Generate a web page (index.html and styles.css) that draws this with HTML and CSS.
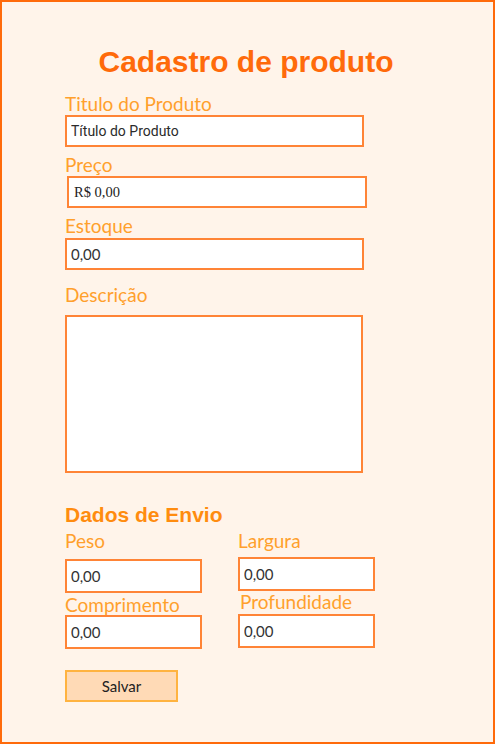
FILE: index.html
```html
<!DOCTYPE html>
<html lang="pt-BR">
<head>
<meta charset="utf-8">
<title>Cadastro de produto</title>
<link rel="stylesheet" href="styles.css">
</head>
<body>
<div class="frame">
  <h1 class="title">Cadastro de produto</h1>

  <label class="label l-titulo">Titulo do Produto</label>
  <input class="field f-titulo" type="text" value="Título do Produto">

  <label class="label l-preco">Preço</label>
  <input class="field f-preco" type="text" value="R$ 0,00">

  <label class="label l-estoque">Estoque</label>
  <input class="field f-estoque" type="text" value="0,00">

  <label class="label l-desc">Descrição</label>
  <textarea class="area"></textarea>

  <h2 class="subtitle">Dados de Envio</h2>

  <div class="ship">
    <div class="col">
      <label class="label">Peso</label>
      <input class="field small f-peso" type="text" value="0,00">
      <label class="label l-comp">Comprimento</label>
      <input class="field small" type="text" value="0,00">
    </div>
    <div class="col">
      <label class="label">Largura</label>
      <input class="field small f-larg" type="text" value="0,00">
      <label class="label l-prof">Profundidade</label>
      <input class="field small f-prof" type="text" value="0,00">
    </div>
  </div>

  <button class="save" type="button">Salvar</button>
</div>
</body>
</html>
```

FILE: styles.css
```css
* { box-sizing: border-box; }

html, body {
  margin: 0;
  padding: 0;
  background: #fff4ea;
}

.frame {
  width: 495px;
  height: 744px;
  border: 2px solid #ff6a0a;
  background: #fff4ea;
  padding: 43px 0 0 63px;
  display: flex;
  flex-direction: column;
  align-items: flex-start;
}

.title {
  margin: 0;
  align-self: stretch;
  margin-left: -63px;
  text-align: center;
  font-family: "Liberation Sans", Arial, sans-serif;
  font-weight: bold;
  font-size: 30px;
  line-height: 34px;
  color: #ff6a0a;
  padding-right: 3px;
}

.label {
  display: block;
  font-family: Lato, "Noto Sans", sans-serif;
  font-size: 19px;
  line-height: 20px;
  color: #ffa02c;
}

.field {
  display: block;
  height: 32px;
  border: 2px solid #ff8436;
  background: #fff;
  outline: none;
  margin: 0;
  padding: 0 4px;
  font-family: Lato, "Noto Sans", sans-serif;
  font-size: 15px;
  color: #333;
}

.l-titulo { margin-top: 15px; }
.f-titulo {
  margin-top: 1px;
  width: 299px;
  font-family: Roboto, "Noto Sans", sans-serif;
  font-size: 14px;
  color: #2b2b2b;
}

.l-preco { margin-top: 8px; }
.f-preco {
  margin-top: 1px;
  margin-left: 2px;
  width: 300px;
  font-family: "Liberation Serif", "Times New Roman", serif;
  font-size: 14.5px;
  padding-left: 5px;
  color: #222;
}

.l-estoque { margin-top: 8px; }
.f-estoque {
  margin-top: 2px;
  width: 299px;
}

.l-desc { margin-top: 15px; }
.area {
  display: block;
  margin: 10px 0 0;
  width: 298px;
  height: 158px;
  border: 2px solid #ff8436;
  background: #fff;
  resize: none;
  outline: none;
}

.subtitle {
  margin: 31px 0 0;
  font-family: "Liberation Sans", Arial, sans-serif;
  font-weight: bold;
  font-size: 21px;
  line-height: 22px;
  color: #ff8c0f;
}

.ship {
  margin-top: 5px;
  display: grid;
  grid-template-columns: 137px 137px;
  column-gap: 36px;
}

.col {
  display: flex;
  flex-direction: column;
  align-items: flex-start;
}

.small {
  width: 137px;
  height: 34px;
  margin-top: 0;
}

.f-peso { margin-top: 8px; }
.l-comp { margin-top: 2px; }

.f-larg { margin-top: 6px; }
.l-prof { margin-top: 1px; margin-left: 2px; }
.f-prof { margin-top: 2px; }

.save {
  margin-top: 21px;
  width: 113px;
  height: 32px;
  background: #ffdab6;
  border: 2px solid #ffb340;
  font-family: Lato, "Noto Sans", sans-serif;
  font-size: 15px;
  color: #222;
  padding: 0;
}
```
